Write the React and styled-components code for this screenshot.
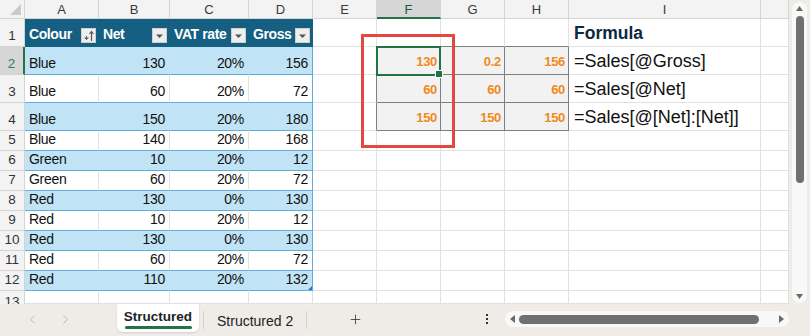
import React from 'react';
import styled, { createGlobalStyle } from 'styled-components';
import { ChevronLeft, ChevronRight, Plus } from 'lucide-react';

const GlobalStyle = createGlobalStyle`
  html, body { margin: 0; padding: 0; }
  body { font-family: "Liberation Sans", Arial, sans-serif; background: #efece8; }
  #root { width: 810px; height: 336px; overflow: hidden; }
`;

const GRID = '#e1e1e1';
const HEAD_LINE = '#d4d4d4';
const TBL = '#156082';
const BAND = '#c0e4f5';
const BAND_LINE = '#62addb';
const CALC_LINE = '#7f7f7f';
const GREEN = '#217346';

const Window = styled.div`
  width: 810px;
  height: 336px;
  display: flex;
  flex-direction: column;
  background: #efece8;
`;

const Main = styled.div`
  display: flex;
  height: 304px;
`;

const Sheet = styled.div`
  position: relative;
  width: 789px;
  height: 304px;
  overflow: hidden;
  background: #fff;
  display: grid;
  grid-template-columns: 25px 74px 71px 79px 64px 64px 64px 64px 64px 192px 28px;
  grid-template-rows: 19px repeat(4, 28px) repeat(8, 20px) 13px;
`;

const Corner = styled.div`
  background: #f3f3f3;
  border-right: 1px solid ${HEAD_LINE};
  border-bottom: 1px solid ${HEAD_LINE};
  box-sizing: border-box;
  position: relative;
`;

const ColHead = styled.div`
  box-sizing: border-box;
  background: ${(p) => (p.$active ? '#d6d6d6' : '#f3f3f3')};
  border-right: 1px solid ${HEAD_LINE};
  border-bottom: ${(p) => (p.$active ? `2px solid ${GREEN}` : `1px solid ${HEAD_LINE}`)};
  display: flex;
  align-items: center;
  justify-content: center;
  font-size: 13px;
  color: ${(p) => (p.$active ? '#165c34' : '#3a3a3a')};
  padding-top: ${(p) => (p.$active ? '1px' : '0')};
`;

const RowHead = styled.div`
  box-sizing: border-box;
  background: ${(p) => (p.$active ? '#d6d6d6' : '#f3f3f3')};
  border-right: ${(p) => (p.$active ? `2px solid ${GREEN}` : `1px solid ${HEAD_LINE}`)};
  border-bottom: ${(p) => (p.$clip ? '0' : `1px solid ${HEAD_LINE}`)};
  display: flex;
  align-items: ${(p) => (p.$clip ? 'flex-start' : 'flex-end')};
  justify-content: center;
  padding-bottom: ${(p) => (p.$clip ? '0' : '2px')};
  padding-top: ${(p) => (p.$clip ? '3px' : '0')};
  font-size: 13.5px;
  line-height: 16px;
  color: ${(p) => (p.$active ? '#3b7d57' : '#333')};
  overflow: hidden;
`;

const Cell = styled.div`
  box-sizing: border-box;
  position: relative;
  background: ${(p) => p.$bg || '#fff'};
  border-right: 1px solid ${(p) => p.$rb || GRID};
  border-bottom: 1px solid ${(p) => p.$bb || GRID};
  display: flex;
  align-items: flex-end;
  justify-content: ${(p) => (p.$right ? 'flex-end' : 'flex-start')};
  padding: 0 4px 2px 4px;
  font-size: 14px;
  letter-spacing: -0.3px;
  line-height: 17px;
  color: #111;
  white-space: nowrap;
  overflow: hidden;
`;

const TableHead = styled(Cell)`
  background: ${TBL};
  border-right-color: ${TBL};
  border-bottom-color: ${TBL};
  color: #fff;
  font-weight: bold;
  letter-spacing: -0.4px;
  justify-content: space-between;
  padding: 0 2px 3px 4px;
`;

const FilterButton = styled.span`
  width: 15px;
  height: 15px;
  flex: none;
  box-sizing: border-box;
  background: #eeeeee;
  border: 1px solid #d0d0d0;
  display: flex;
  align-items: center;
  justify-content: center;
  margin-bottom: 0;
`;

const CalcValue = styled(Cell)`
  background: #f2f2f2;
  font-weight: bold;
  font-size: 13px;
  letter-spacing: -0.3px;
  color: #f08a1c;
  padding: 0 3px 4px 3px;
`;

const Heading = styled(Cell)`
  font-weight: bold;
  font-size: 17.5px;
  letter-spacing: 0;
  line-height: 20px;
  color: #0e2841;
  padding: 0 5px 3px 5px;
`;

const FormulaText = styled(Cell)`
  font-size: 18px;
  letter-spacing: 0;
  line-height: 21px;
  color: #111;
  padding: 0 5px 2px 5px;
`;

const ResizeMark = styled.span`
  position: absolute;
  right: 0;
  bottom: 0;
  width: 0;
  height: 0;
  border-left: 4px solid transparent;
  border-bottom: 4px solid #2f6fd0;
`;

const Selection = styled.div`
  position: absolute;
  left: 376px;
  top: 46px;
  width: 65px;
  height: 30px;
  box-sizing: border-box;
  border: 2px solid ${GREEN};
  pointer-events: none;
`;

const FillHandle = styled.span`
  position: absolute;
  right: -4px;
  bottom: -4px;
  width: 6px;
  height: 6px;
  background: ${GREEN};
  border: 1px solid #fff;
`;

const Highlight = styled.div`
  position: absolute;
  left: 361px;
  top: 34px;
  width: 94px;
  height: 114px;
  box-sizing: border-box;
  border: 3px solid #e5463f;
  pointer-events: none;
`;

const VScroll = styled.div`
  width: 21px;
  background: #efece8;
  box-sizing: border-box;
  padding: 2px 3px 1px 3px;
  display: flex;
`;

const VTrack = styled.div`
  flex: 1;
  background: #f8f8f8;
  border-radius: 8px;
  display: flex;
  flex-direction: column;
  align-items: center;
  padding: 4px 0 4px 0;
`;

const Thumb = styled.div`
  width: 8px;
  height: 167px;
  border-radius: 4px;
  background: #707070;
  margin-top: 5px;
`;

const Spacer = styled.div`
  flex: 1;
`;

const TabBar = styled.div`
  height: 32px;
  display: flex;
  align-items: flex-start;
  background: #efece8;
`;

const Nav = styled.div`
  width: 117px;
  height: 30px;
  box-sizing: border-box;
  display: flex;
  align-items: center;
  padding-left: 25px;
  gap: 18px;
  color: #b9b9b9;
`;

const ActiveTab = styled.div`
  width: 82px;
  height: 28px;
  box-sizing: border-box;
  background: #fff;
  border-radius: 0 0 6px 6px;
  box-shadow: 0 1px 2px rgba(0, 0, 0, 0.12);
  display: flex;
  flex-direction: column;
  align-items: center;
  padding-top: 5px;
`;

const TabLabel = styled.span`
  font-size: ${(p) => (p.$active ? '13.5px' : '14px')};
  font-weight: ${(p) => (p.$active ? 'bold' : 'normal')};
  line-height: 16px;
  color: #222;
  white-space: nowrap;
`;

const Underline = styled.span`
  width: 67px;
  height: 3px;
  border-radius: 2px;
  background: ${GREEN};
  margin-top: 1px;
`;

const Tab = styled.div`
  height: 30px;
  display: flex;
  align-items: center;
  padding: 3px 13px 0 13px;
  box-sizing: border-box;
`;

const Separator = styled.span`
  width: 1px;
  height: 18px;
  background: #d2d2d2;
  margin-top: 7px;
  margin-left: ${(p) => p.$ml || '0'};
`;

const AddButton = styled.div`
  width: 96px;
  height: 30px;
  display: flex;
  align-items: center;
  justify-content: center;
  color: #333;
`;

const MoreButton = styled.div`
  width: 18px;
  height: 30px;
  margin-left: 75px;
  display: flex;
  flex-direction: column;
  align-items: center;
  justify-content: center;
  gap: 2px;
`;

const Dot = styled.span`
  width: 2px;
  height: 2px;
  background: #333;
`;

const HScroll = styled.div`
  width: 284px;
  height: 16px;
  margin-top: 7px;
  margin-left: 9px;
  background: #f8f8f8;
  border-radius: 8px;
  display: flex;
  align-items: center;
  padding: 0 5px;
  box-sizing: border-box;
  gap: 4px;
`;

const HThumb = styled.div`
  width: 240px;
  height: 9px;
  border-radius: 5px;
  background: #707070;
`;

const Tri = ({ dir }) => {
  const d = {
    up: 'M0 5 L3.5 0 L7 5 Z',
    down: 'M0 0 L7 0 L3.5 5 Z',
    left: 'M5 0 L5 8 L0 4 Z',
    right: 'M0 0 L5 4 L0 8 Z',
  }[dir];
  const w = dir === 'up' || dir === 'down' ? 7 : 5;
  const h = dir === 'up' || dir === 'down' ? 5 : 8;
  return (
    <svg width={w} height={h} viewBox={`0 0 ${w} ${h}`}>
      <path d={d} fill="#6a6a6a" />
    </svg>
  );
};

const DropIcon = () => (
  <svg width="13" height="13" viewBox="0 0 13 13">
    <path d="M3 5.5 L10 5.5 L6.5 9 Z" fill="#555" />
  </svg>
);

const SortIcon = () => (
  <svg width="13" height="13" viewBox="0 0 13 13">
    <path d="M2 8.5 L7 8.5 L4.5 11 Z" fill="#555" />
    <path d="M4.5 8.5 L4.5 7" stroke="#555" strokeWidth="1" />
    <path d="M9.5 12 L9.5 3" stroke="#555" strokeWidth="1.2" />
    <path d="M7.5 5 L9.5 2.5 L11.5 5" stroke="#555" strokeWidth="1.1" fill="none" />
  </svg>
);

const data = [
  ['Blue', 130, '20%', 156],
  ['Blue', 60, '20%', 72],
  ['Blue', 150, '20%', 180],
  ['Blue', 140, '20%', 168],
  ['Green', 10, '20%', 12],
  ['Green', 60, '20%', 72],
  ['Red', 130, '0%', 130],
  ['Red', 10, '20%', 12],
  ['Red', 130, '0%', 130],
  ['Red', 60, '20%', 72],
  ['Red', 110, '20%', 132],
];

const calc = [
  [130, 0.2, 156],
  [60, 60, 60],
  [150, 150, 150],
];

const formulas = ['=Sales[@Gross]', '=Sales[@Net]', '=Sales[@[Net]:[Net]]'];

const headers = ['Colour', 'Net', 'VAT rate', 'Gross'];
const letters = ['A', 'B', 'C', 'D', 'E', 'F', 'G', 'H', 'I', ''];

function tableCells(row, i, r) {
  const band = i % 2 === 0;
  const bg = band ? BAND : '#fff';
  return row.map((v, c) => {
    const last = c === 3;
    const rb = last ? BAND_LINE : band ? BAND : GRID;
    return (
      <Cell key={`t${r}-${c}`} $bg={bg} $rb={rb} $bb={BAND_LINE} $right={c > 0}>
        {v}
        {last && i === data.length - 1 && <ResizeMark />}
      </Cell>
    );
  });
}

export default function App() {
  const rows = [];

  // row 1
  rows.push(<RowHead key="rh1">1</RowHead>);
  headers.forEach((h, c) => {
    rows.push(
      <TableHead key={`h${c}`}>
        <span>{h}</span>
        <FilterButton>{c === 0 ? <SortIcon /> : <DropIcon />}</FilterButton>
      </TableHead>
    );
  });
  rows.push(<Cell key="e1" />);
  [0, 1, 2].forEach((k) => rows.push(<Cell key={`c1${k}`} $bb={CALC_LINE} />));
  rows.push(<Heading key="i1">Formula</Heading>);
  rows.push(<Cell key="j1" />);

  data.forEach((row, i) => {
    const r = i + 2;
    rows.push(
      <RowHead key={`rh${r}`} $active={r === 2}>
        {r}
      </RowHead>
    );
    rows.push(...tableCells(row, i, r));
    if (i < 3) {
      rows.push(<Cell key={`e${r}`} $rb={CALC_LINE} />);
      calc[i].forEach((v, k) => {
        rows.push(
          <CalcValue key={`c${r}${k}`} $right $rb={CALC_LINE} $bb={CALC_LINE}>
            {v}
          </CalcValue>
        );
      });
      rows.push(<FormulaText key={`i${r}`}>{formulas[i]}</FormulaText>);
      rows.push(<Cell key={`j${r}`} />);
    } else {
      ['e', 'f', 'g', 'h', 'i', 'j'].forEach((k) => rows.push(<Cell key={`${k}${r}`} />));
    }
  });

  // row 13
  rows.push(
    <RowHead key="rh13" $clip>
      13
    </RowHead>
  );
  letters.forEach((l, k) => rows.push(<Cell key={`r13${k}`} />));

  return (
    <Window>
      <GlobalStyle />
      <Main>
        <Sheet>
          <Corner>
            <svg width="24" height="18" viewBox="0 0 24 18" style={{ position: 'absolute', left: 0, top: 0 }}>
              <path d="M21 4 L21 15 L10 15 Z" fill="#c9c9c9" />
            </svg>
          </Corner>
          {letters.map((l, k) => (
            <ColHead key={`col${k}`} $active={l === 'F'}>
              {l}
            </ColHead>
          ))}
          {rows}
          <Highlight />
          <Selection>
            <FillHandle />
          </Selection>
        </Sheet>
        <VScroll>
          <VTrack>
            <Tri dir="up" />
            <Thumb />
            <Spacer />
            <Tri dir="down" />
          </VTrack>
        </VScroll>
      </Main>
      <TabBar>
        <Nav>
          <ChevronLeft size={15} strokeWidth={1.6} />
          <ChevronRight size={15} strokeWidth={1.6} />
        </Nav>
        <ActiveTab>
          <TabLabel $active>Structured</TabLabel>
          <Underline />
        </ActiveTab>
        <Separator $ml="4px" />
        <Tab>
          <TabLabel>Structured 2</TabLabel>
        </Tab>
        <Separator />
        <AddButton>
          <Plus size={15} strokeWidth={1.3} />
        </AddButton>
        <MoreButton>
          <Dot />
          <Dot />
          <Dot />
        </MoreButton>
        <HScroll>
          <Tri dir="left" />
          <HThumb />
          <Spacer />
          <Tri dir="right" />
        </HScroll>
      </TabBar>
    </Window>
  );
}
